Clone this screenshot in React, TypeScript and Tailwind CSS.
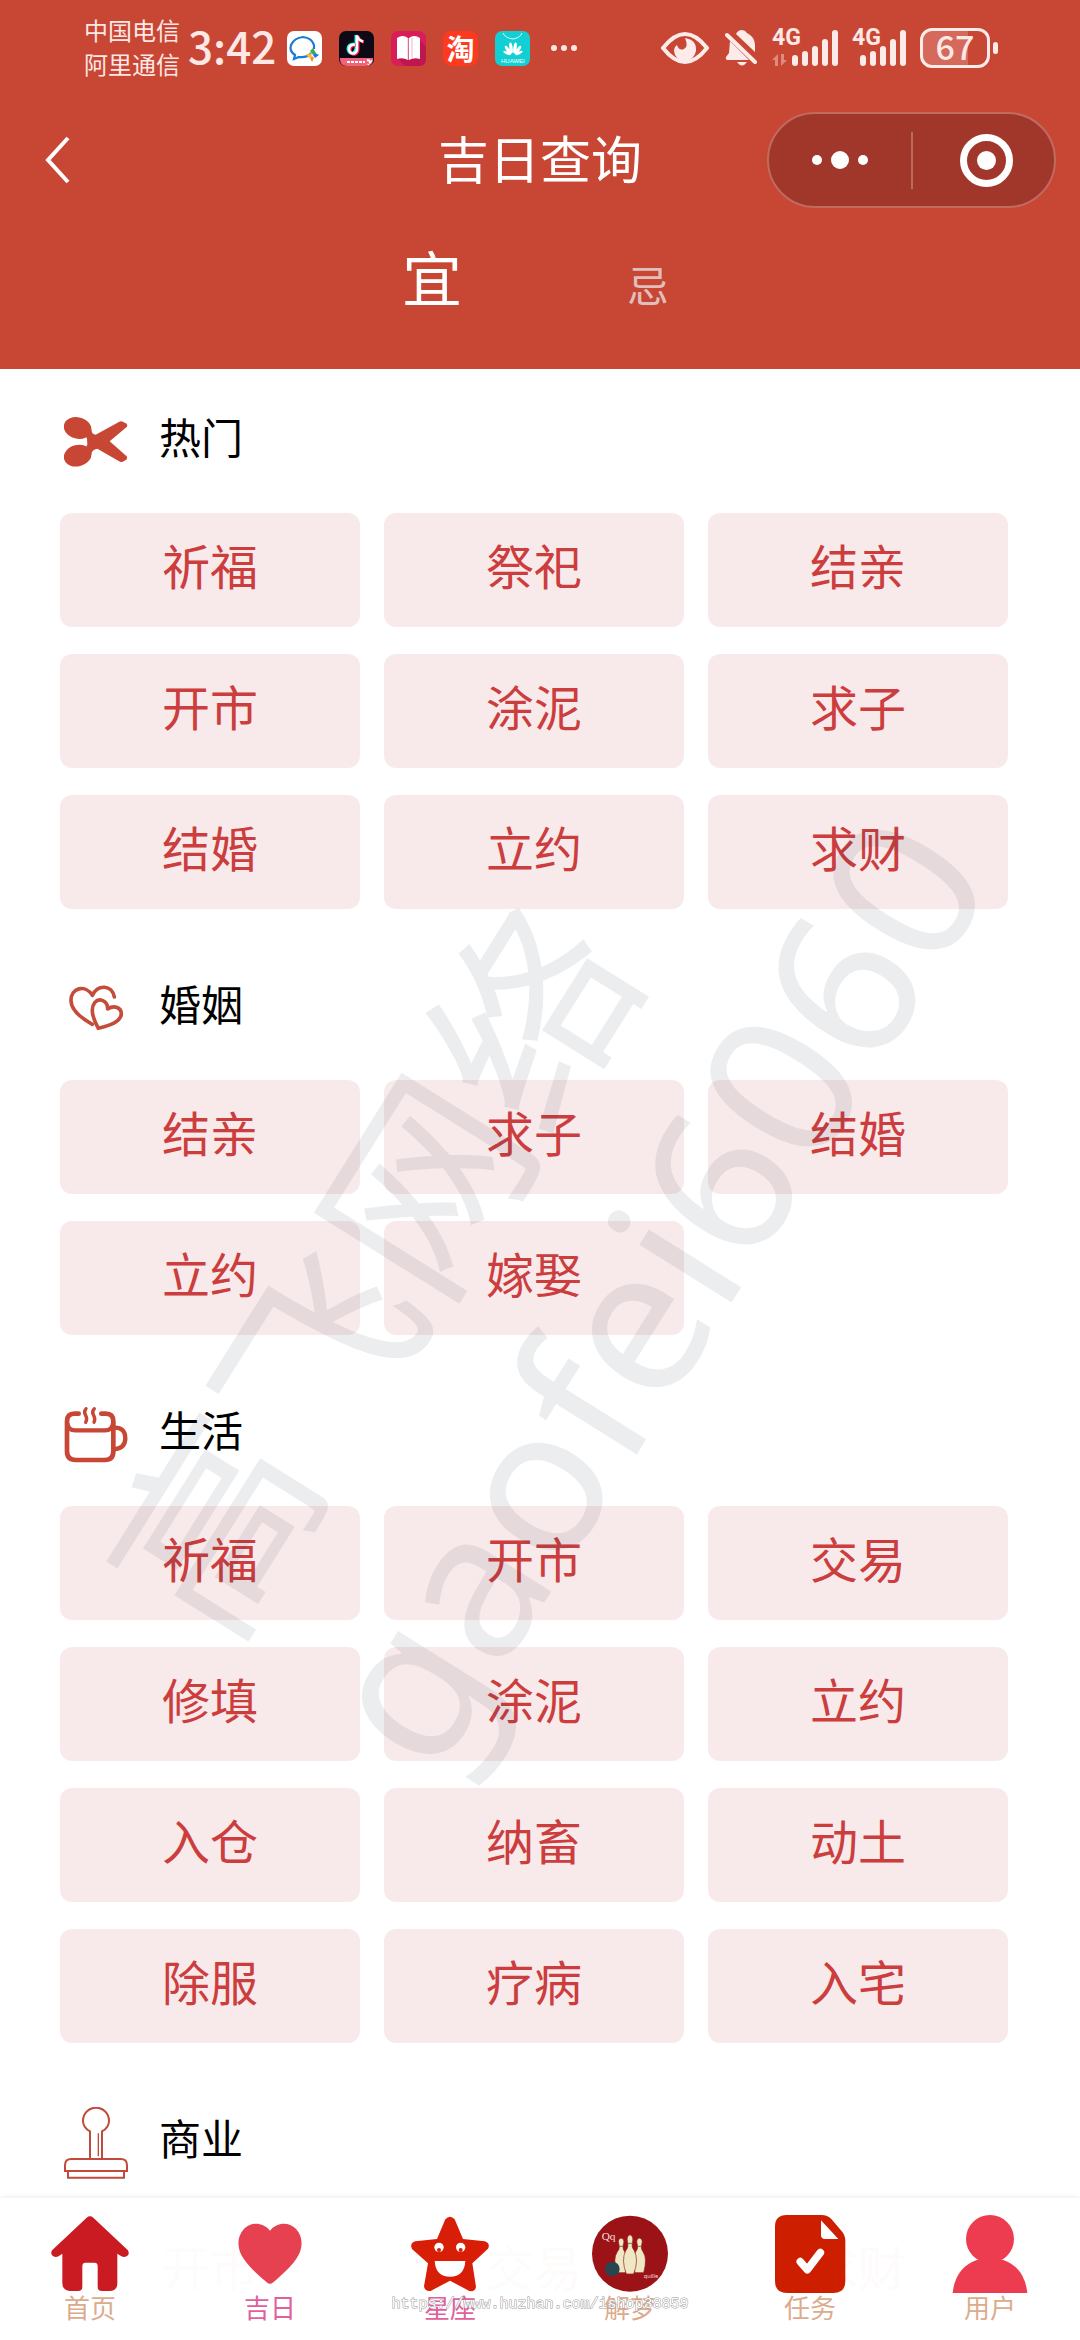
import React, { useState } from 'react';

const FONT = "font-['Noto_Sans_CJK_SC','Noto_Sans',sans-serif]";
const RED = '#c84634';

function ScissorsIcon() {
  return (
    <svg viewBox="72 78 192 216" className="h-[72px] w-16" fill={RED} aria-hidden="true">
      <ellipse cx="113" cy="144" rx="42" ry="32" transform="rotate(14 113 144)" />
      <ellipse cx="113" cy="227" rx="42" ry="32" transform="rotate(-14 113 227)" />
      <path d="M141 176 L132 156 L154 150 Q156 164 167 164 L238 125 Q244 122 250 126 L260 131 Q264 136 260 141 L209 184 L260 229 Q264 234 259 239 L248 245 Q242 248 236 243 L172 206 Q156 208 153 224 L134 212 L142 193 Z" />
    </svg>
  );
}

function HeartsIcon() {
  return (
    <svg viewBox="72 69 192 216" className="h-[72px] w-16" fill="none" stroke="#c44c3b" strokeWidth="11" strokeLinecap="round" strokeLinejoin="round" aria-hidden="true">
      <path d="M157 223 C125 205 93 180 93 152 C92 113 136 102 157 136 C174 102 216 104 223 141" />
      <path d="M175 235 C160 208 150 176 164 158 C177 143 203 150 203 177 C223 164 244 173 244 192 C242 216 209 226 175 235 Z" />
    </svg>
  );
}

function CupIcon() {
  return (
    <svg viewBox="72 57 192 216" className="h-[72px] w-16" fill="none" stroke={RED} strokeWidth="14" strokeLinecap="round" aria-hidden="true">
      <path d="M116 101 H104 Q81 101 81 124 V214 Q81 240 107 240 H195 Q220 240 220 214 V124 Q220 101 197 101 H184" />
      <path d="M82 130 Q84 151 106 151 H195 Q217 151 219 130" strokeWidth="13" />
      <path d="M222 143 Q256 141 256 176 Q255 205 222 208" strokeWidth="13" />
      <path d="M138 86 Q130 96 137 106 Q143 117 137 127 M163 86 Q154 96 161 106 Q167 117 162 127" strokeWidth="10" />
    </svg>
  );
}

function StampIcon() {
  return (
    <svg viewBox="72 141 192 216" className="h-[72px] w-16" fill="none" stroke="#c04a3c" strokeWidth="6" aria-hidden="true">
      <path d="M150 296 V214 C132 204 129 190 129 182 A39 39 0 0 1 207 182 C207 192 203 205 186 214 V296" />
      <path d="M175 220 V289" strokeWidth="4" />
      <path d="M75 333 V316 Q75 297 94 297 H242 Q261 297 261 316 V333 Z" />
      <path d="M84 334 V353 H252 V334" />
    </svg>
  );
}

function HomeIcon() {
  return (
    <svg viewBox="33 465 234 234" className="size-[78px]" fill="#cb1b22" aria-hidden="true">
      <path d="M140 473 Q150 465 160 473 L263 570 Q269 578 264 586 Q254 595 243 588 L232 581 V672 Q231 693 208 693 H186 Q173 693 173 680 V618 Q173 608 163 608 H137 Q127 608 127 618 V680 Q127 693 114 693 H90 Q67 692 67 668 V581 L57 588 Q45 595 36 586 Q31 577 37 570 Z" />
    </svg>
  );
}

function HeartIcon() {
  return (
    <svg viewBox="573 465 234 234" className="size-[78px]" fill="#e54150" aria-hidden="true">
      <path d="M690 512 C668 484 629 486 611 508 C587 536 593 572 612 598 C632 626 656 646 680 667 Q690 676 700 667 C724 646 748 626 768 598 C787 572 793 536 769 508 C750 486 712 484 690 512 Z" />
    </svg>
  );
}

function StarIcon() {
  return (
    <svg viewBox="153 105 234 234" className="size-[78px]" aria-hidden="true">
      <path d="M256 118 Q270 102 284 118 L309 177 L374 184 Q392 190 384 206 L337 250 L348 320 Q346 336 328 333 L270 302 L212 333 Q194 335 192 319 L204 250 L156 207 Q148 190 166 184 L231 177 Z" fill="#d91e07" />
      <circle cx="237" cy="202" r="14" fill="#fff" />
      <circle cx="302" cy="202" r="14" fill="#fff" />
      <circle cx="237" cy="210" r="6" fill="#d91e07" />
      <circle cx="302" cy="210" r="6" fill="#d91e07" />
      <path d="M224 243 H316 Q313 290 270 290 Q227 290 224 243 Z" fill="#fff" />
    </svg>
  );
}

function BowlingIcon() {
  return (
    <svg viewBox="693 105 234 234" className="size-[78px]" aria-hidden="true">
      <circle cx="810" cy="221" r="114" fill="#9c1317" />
      <g fill="#efe8c4" stroke="#9c1317" strokeWidth="2">
        <path d="M783 174 q-10 3 -7 16 q5 16 -4 25 q-14 20 -2 63 h26 q12 -43 -2 -63 q-8 -9 -3 -25 q3 -13 -8 -16Z" />
        <path d="M838 174 q-10 3 -7 16 q5 16 -4 25 q-14 20 -2 63 h26 q12 -43 -2 -63 q-8 -9 -3 -25 q3 -13 -8 -16Z" />
        <path d="M810 164 q-11 4 -8 20 q5 18 -5 28 q-14 28 2 70 h22 q16 -42 2 -70 q-10 -10 -5 -28 q3 -16 -8 -20Z" />
      </g>
      <path d="M777 199 h12 M832 199 h12 M804 190 h13" stroke="#5d7a62" strokeWidth="3" />
      <circle cx="757" cy="267" r="22" fill="#2a4450" />
      <text x="725" y="180" fontSize="34" fill="#f6dede" fontFamily="Liberation Serif, serif">Qq</text>
      <text x="851" y="293" fontSize="17" fill="#f6dede" fontFamily="Noto Sans, sans-serif">quille</text>
    </svg>
  );
}

function TaskIcon() {
  return (
    <svg viewBox="153 105 234 234" className="size-[78px]" aria-hidden="true">
      <path d="M200 105 H305 Q322 105 334 117 L364 152 Q376 165 376 182 V303 Q376 339 340 339 H201 Q165 339 165 303 V140 Q165 105 200 105 Z" fill="#ce1e00" />
      <path d="M303 121 L355 177 H315 Q303 177 303 165 Z" fill="#fff" />
      <path d="M241 245 L262 269 L301 218" fill="none" stroke="#fff" strokeWidth="23" strokeLinecap="round" strokeLinejoin="round" />
    </svg>
  );
}

function UserIcon() {
  return (
    <svg viewBox="693 105 234 234" className="size-[78px]" fill="#ed3b50" aria-hidden="true">
      <circle cx="810" cy="177" r="72" />
      <path d="M698 339 Q706 263 770 240 H850 Q914 263 922 339 Z" />
    </svg>
  );
}

function SignalBars() {
  return (
    <svg viewBox="0 0 46 36" className="h-9 w-[46px]" fill="#fdebe9" aria-hidden="true">
      <rect x="0" y="25" width="6" height="11" rx="3" />
      <rect x="10" y="21" width="6" height="15" rx="3" />
      <rect x="20" y="16" width="6" height="20" rx="3" />
      <rect x="30" y="9" width="6" height="27" rx="3" />
      <rect x="40" y="0" width="6" height="36" rx="3" />
    </svg>
  );
}

function StatusBar() {
  return (
    <div className="flex h-24 items-center justify-between pr-[82px] pl-[84px] text-[#fde8e5]">
      <div className="flex items-center">
        <div className="pb-0.5 text-2xl leading-[34px]">
          <div>中国电信</div>
          <div>阿里通信</div>
        </div>
        <div className="ml-2 w-[99px] pb-1.5 text-[44px] leading-[48px] font-medium">3:42</div>
        <div className="flex items-center gap-[17px]">
          <svg viewBox="0 0 35 35" className="size-[35px]" aria-hidden="true">
            <rect width="35" height="35" rx="7" fill="#fff" />
            <path d="M24 22 Q20 27 12 26 L7 28 L8 24 Q2 20 4 14 Q7 7 16 6 Q25 7 27 14 V18" fill="none" stroke="#1a7bd9" strokeWidth="2.2" />
            <path d="M26 17 l3 5 l-3 2 l-3 -4Z" fill="#3fae49" />
            <path d="M28 22 l4 2 l-4 3 l-2 -3Z" fill="#1a7bd9" />
            <path d="M25 25 l2 2 l-2 4 l-2 -4Z" fill="#f0932b" />
            <path d="M19 24 l4 -2 l2 3 l-3 2Z" fill="#f7b92e" />
          </svg>
          <svg viewBox="0 0 35 35" className="size-[35px]" aria-hidden="true">
            <rect width="35" height="35" rx="7" fill="#0d0a16" />
            <path d="M1 27 H34 V28 Q34 35 27 35 H8 Q1 35 1 28Z" fill="#f2627a" />
            <g fill="none" strokeWidth="3">
              <path d="M15 13 Q9 13 9 18 Q10 23 14 22 Q17 21 17 17 V4 Q18 9 23 10" stroke="#25f4ee" />
              <path d="M17 14 Q11 14 11 19 Q12 24 16 23 Q19 22 19 18 V5 Q20 10 25 11" stroke="#fe2c55" />
              <path d="M16 13.500 Q10 13.500 10 18.500 Q11 23 15 22.500 Q18 21.500 18 17.500 V4.500 Q19 9 24 10.500" stroke="#fff" strokeWidth="2.500" />
            </g>
            <path d="M8 31 h18 M28 29 l4 1 l-3 4" stroke="#fff" strokeWidth="2" strokeDasharray="3 1" fill="none" />
          </svg>
          <svg viewBox="0 0 35 35" className="size-[35px]" aria-hidden="true">
            <rect width="35" height="35" rx="7" fill="#d81e58" />
            <path d="M28 8 L35 16 V28 Q35 35 28 35 H14 L6 27Z" fill="#c01650" />
            <path d="M6 7 Q12 3 17 7 V29 Q12 26 6 28Z M29 7 Q23 3 18 7 V29 Q23 26 29 28Z" fill="#fff" />
            <path d="M17 7 V29 M21 7 V27" stroke="#f0b8c8" />
          </svg>
          <div className="flex size-[35px] items-center justify-center rounded-lg bg-[#fb3a1f] text-[28px] leading-[35px] font-bold text-white">淘</div>
          <svg viewBox="0 0 35 35" className="size-[35px]" aria-hidden="true">
            <rect width="35" height="35" rx="7" fill="#12cfd3" />
            <path d="M8 2 Q10 7 18 8 Q25 7 27 2" fill="none" stroke="#dffafa" />
            <g fill="#fff">
              <ellipse cx="16" cy="17" rx="1.700" ry="5.500" transform="rotate(-8 16 17)" />
              <ellipse cx="20" cy="17" rx="1.700" ry="5.500" transform="rotate(8 20 17)" />
              <ellipse cx="13" cy="19" rx="1.600" ry="5" transform="rotate(-35 13 19)" />
              <ellipse cx="23" cy="19" rx="1.600" ry="5" transform="rotate(35 23 19)" />
              <ellipse cx="12" cy="22" rx="1.300" ry="4" transform="rotate(-65 12 22)" />
              <ellipse cx="24" cy="22" rx="1.300" ry="4" transform="rotate(65 24 22)" />
            </g>
            <text x="6" y="32" fontSize="6" fill="#fff" fontFamily="Liberation Sans, sans-serif">HUAWEI</text>
          </svg>
          <svg viewBox="0 0 27 8" className="ml-1 h-2 w-[27px]" fill="#fde8e5" aria-hidden="true">
            <circle cx="3" cy="4" r="3" />
            <circle cx="13" cy="4" r="3" />
            <circle cx="23" cy="4" r="3" />
          </svg>
        </div>
      </div>
      <div className="flex items-center">
        <svg viewBox="0 0 48 32" className="h-8 w-12" aria-hidden="true">
          <path d="M2 16 Q24 -12 46 16 Q24 44 2 16Z" fill="none" stroke="#fdebe9" strokeWidth="4" />
          <path d="M24 6 Q36 8 35 19 Q33 28 24 29 Q14 28 13 19 Q13 15 16 13 Q18 19 23 17 Q27 14 25 9Z" fill="#fdebe9" />
        </svg>
        <svg viewBox="0 0 33 36" className="mr-3.5 ml-4 h-9 w-[33px]" fill="#fdebe9" aria-hidden="true">
          <path d="M11 4 Q13 0 17 0 Q20 0 22 3 Q30 7 30 15 V22Z" />
          <path d="M5 11 L24 30 H2 Q0 29 1 27 L4 23Z" />
          <path d="M12 32 H22 Q17 39 12 32Z" />
          <path d="M2 5 L30 32" stroke="#fdebe9" strokeWidth="4" strokeLinecap="round" />
        </svg>
        <div className="relative flex w-[66px] justify-end">
          <span className="absolute -top-1 left-0 font-['Roboto',sans-serif] text-[23px] leading-6 font-bold">4G</span>
          <svg viewBox="0 0 16 12" className="absolute bottom-0 left-0 h-3 w-4" fill="#e08a7e" aria-hidden="true">
            <path d="M6 12 V0 L0 6 H3 V12Z M9 0 V12 L15 6 H12 V0Z" />
          </svg>
          <SignalBars />
        </div>
        <div className="relative ml-3.5 flex w-[54px] justify-end">
          <span className="absolute -top-1 left-0 font-['Roboto',sans-serif] text-[23px] leading-6 font-bold">4G</span>
          <SignalBars />
        </div>
        <div className="ml-3.5 flex h-10 w-[70px] items-center justify-center rounded-xl border-3 border-[#fdebe9] bg-linear-to-r from-[#d4695c] from-70% to-[#c84634] to-70% pb-1 text-[34px] leading-8 font-medium">
          67
        </div>
        <div className="ml-[3px] h-3 w-[5px] rounded-sm bg-[#fdebe9]" />
      </div>
    </div>
  );
}

function TitleBar() {
  return (
    <div className="grid h-32 grid-cols-3 items-center pr-6 pl-11">
      <button type="button" aria-label="返回" className="w-7">
        <svg viewBox="0 0 28 48" className="h-12 w-7" fill="none" stroke="#fff" strokeWidth="4" aria-hidden="true">
          <path d="M24 2 L4 24 L24 46" />
        </svg>
      </button>
      <h1 className="-ml-5 pb-1.5 text-center text-[51px] leading-[60px] text-white">吉日查询</h1>
      <div className="flex h-24 w-[289px] items-center justify-self-end rounded-full border-2 border-[#c06a60] bg-[#a1372b]">
        <button type="button" aria-label="更多" className="flex flex-1 items-center justify-center gap-[9px]">
          <span className="size-[10px] rounded-full bg-white" />
          <span className="size-[18px] rounded-full bg-white" />
          <span className="size-[10px] rounded-full bg-white" />
        </button>
        <span className="h-[57px] w-0.5 bg-[#bb6a60]" />
        <button type="button" aria-label="关闭" className="flex flex-1 items-center justify-center">
          <span className="ml-1.5 flex size-[53px] items-center justify-center rounded-full border-7 border-white">
            <span className="size-[19px] rounded-full bg-white" />
          </span>
        </button>
      </div>
    </div>
  );
}

const SECTIONS = [
  { title: '热门', icon: <ScissorsIcon />, items: ['祈福', '祭祀', '结亲', '开市', '涂泥', '求子', '结婚', '立约', '求财'] },
  { title: '婚姻', icon: <HeartsIcon />, items: ['结亲', '求子', '结婚', '立约', '嫁娶'] },
  { title: '生活', icon: <CupIcon />, items: ['祈福', '开市', '交易', '修填', '涂泥', '立约', '入仓', '纳畜', '动土', '除服', '疗病', '入宅'] },
  { title: '商业', icon: <StampIcon />, items: ['开市', '交易', '求财'] },
];

const NAV = [
  { label: '首页', icon: <HomeIcon />, active: false },
  { label: '吉日', icon: <HeartIcon />, active: true },
  { label: '星座', icon: <StarIcon />, active: true },
  { label: '解梦', icon: <BowlingIcon />, active: false },
  { label: '任务', icon: <TaskIcon />, active: false },
  { label: '用户', icon: <UserIcon />, active: false },
];

export default function App() {
  const [tab, setTab] = useState('宜');
  return (
    <div className={`relative h-screen overflow-hidden bg-white ${FONT}`}>
      <header className="bg-[#c84634] pb-[49px]">
        <StatusBar />
        <TitleBar />
        <div className="flex h-24 items-baseline justify-center pt-4">
          {['宜', '忌'].map((name) => (
            <button
              key={name}
              type="button"
              aria-pressed={tab === name}
              onClick={() => setTab(name)}
              className={
                tab === name
                  ? 'w-1/5 text-center text-6xl leading-[72px] text-white'
                  : 'w-1/5 text-center text-[42px] leading-[72px] text-[#e0bfbb]'
              }
            >
              {name}
            </button>
          ))}
        </div>
      </header>

      <main className="flex flex-col gap-[27px] pr-[72px] pl-[60px]">
        {SECTIONS.map((section) => (
          <section key={section.title}>
            <div className="flex h-36 items-center gap-[31px] pt-0.5 pl-1">
              {section.icon}
              <h2 className="pb-3 text-[42px] leading-[48px] text-black">{section.title}</h2>
            </div>
            <div className="grid grid-cols-3 gap-x-6 gap-y-[27px]">
              {section.items.map((item) => (
                <button key={item} type="button" className="h-[114px] rounded-xl bg-[#f8eaeb] pb-3 text-5xl text-[#cc3d3e]">
                  {item}
                </button>
              ))}
            </div>
          </section>
        ))}
      </main>

      <nav className="absolute inset-x-0 bottom-0 grid h-[142px] grid-cols-6 bg-white/98 pt-[17px] shadow-[0_0_6px_rgba(0,0,0,0.1)]">
        {NAV.map((item) => (
          <a
            key={item.label}
            href="#"
            className={
              item.active
                ? 'flex flex-col items-center text-[26px] leading-7 text-[#e0609c]'
                : 'flex flex-col items-center text-[26px] leading-7 text-[#dcab8c]'
            }
          >
            {item.icon}
            {item.label}
          </a>
        ))}
      </nav>

      <div className="pointer-events-none absolute top-[1543px] left-[39px] origin-top-left -rotate-58 pl-2 text-[200px] leading-[254px] whitespace-nowrap text-[#283c50]/9">
        <div>高飞网络</div>
        <div className="font-['Noto_Sans',sans-serif] text-[203px]">gaofei6060</div>
      </div>
      <div className="pointer-events-none absolute inset-x-0 bottom-[23px] text-center font-['Liberation_Mono',monospace] text-[15px] leading-6 text-white [-webkit-text-stroke:1px_#9a9a9a] [paint-order:stroke_fill]">
        https://www.huzhan.com/ishop38859
      </div>
    </div>
  );
}
